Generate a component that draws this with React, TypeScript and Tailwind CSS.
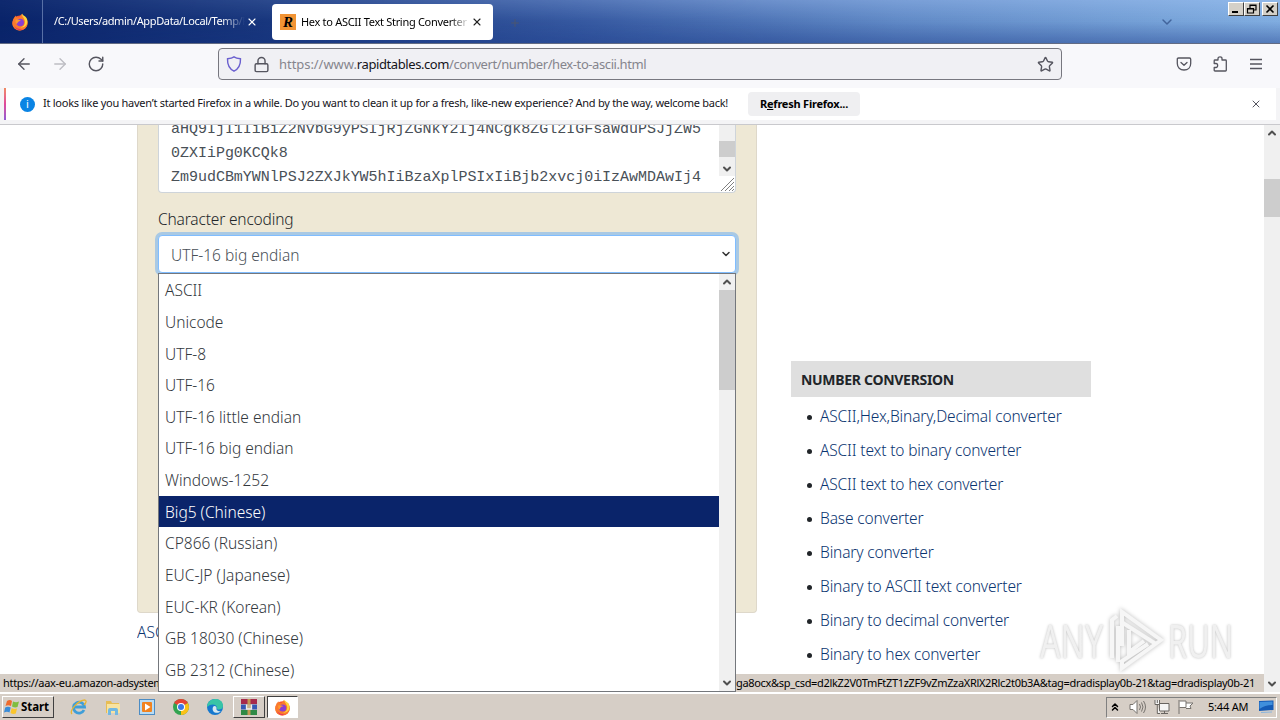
import { useState } from "react";
import {
  ArrowLeft,
  ArrowRight,
  ChevronDown,
  ChevronUp,
  ChevronsUp,
  Lock,
  Menu,
  Plus,
  RotateCw,
  Star,
  X,
} from "lucide-react";

const encodings = [
  "ASCII",
  "Unicode",
  "UTF-8",
  "UTF-16",
  "UTF-16 little endian",
  "UTF-16 big endian",
  "Windows-1252",
  "Big5 (Chinese)",
  "CP866 (Russian)",
  "EUC-JP (Japanese)",
  "EUC-KR (Korean)",
  "GB 18030 (Chinese)",
  "GB 2312 (Chinese)",
];

const links = [
  "ASCII,Hex,Binary,Decimal converter",
  "ASCII text to binary converter",
  "ASCII text to hex converter",
  "Base converter",
  "Binary converter",
  "Binary to ASCII text converter",
  "Binary to decimal converter",
  "Binary to hex converter",
];

function FirefoxIcon({ className }: { className?: string }) {
  return (
    <svg viewBox="0 0 18 18" className={className}>
      <circle cx="9" cy="10" r="7.6" fill="#f9552f" />
      <path d="M2 7C3 4 4 4 4.500 2.500C5 4 6 4.500 8 4.500L10.500 1L12 3C16 5 17.500 9 16 13C14 17 9 18.500 5 16.500C1 14 .7 10 2 7Z" fill="#fb7a2c" />
      <path d="M11 .5C10.500 4 14 5 14 9C14 12 12 14 9.500 14.500C15 15 17.500 10 16 6C15 3 12 3 11 .5Z" fill="#ffd43b" />
      <path d="M3 12C4 16 8 18 12 16.500C8 16.500 4 15 3 12Z" fill="#e3246c" />
      <circle cx="9.200" cy="9.500" r="3.800" fill="#8a3fd1" />
      <path d="M4.500 7C6 6 8 7 10 7.500C8.500 8.500 7 8 6.500 10C6 12 4 10 4.500 7Z" fill="#ff9a2e" />
    </svg>
  );
}

function WindowButton({ children }: { children: React.ReactNode }) {
  return (
    <button className="flex h-[14px] w-4 items-center justify-center border border-t-white border-l-white border-r-[#404040] border-b-[#404040] bg-[#d4d0c8]">
      <svg viewBox="0 0 12 10" className="h-[10px] w-3 shrink-0" fill="none" stroke="#000">
        {children}
      </svg>
    </button>
  );
}

function TabStrip() {
  return (
    <div className="relative flex h-[44px] border-b border-[#626b83] bg-[linear-gradient(90deg,#0a246a_0%,#17357c_20%,#3558a0_45%,#6089c6_70%,#80ade0_100%)]">
      <div className="pointer-events-none absolute inset-0 bg-[linear-gradient(180deg,rgba(180,210,255,0.3)_0%,rgba(80,120,190,0)_50%,rgba(20,50,130,0.4)_100%)] [mask-image:linear-gradient(90deg,rgba(0,0,0,0.1),#000_60%)]" />
      <div className="relative flex w-[43px] items-center justify-center border-r border-[#5870a6] pr-[3px]">
        <FirefoxIcon className="h-[18px] w-[18px]" />
      </div>
      <div className="relative flex w-[225px] items-center pl-[11px] text-white">
        <span className="w-[191px] overflow-hidden pb-px text-[11px] tracking-[-0.36px] whitespace-nowrap [mask-image:linear-gradient(90deg,#000_88%,transparent)]">
          /C:/Users/admin/AppData/Local/Temp/R
        </span>
        <X className="ml-[1px] h-3 w-3" strokeWidth={2.2} />
      </div>
      <div className="relative mt-1 ml-1 flex h-9 w-[221px] items-center rounded bg-white pl-2">
        <span className="flex h-4 w-4 items-center justify-center bg-[#f29434] font-['Liberation_Serif',serif] text-[15px] font-bold text-black italic">
          R
        </span>
        <span className="ml-[5px] w-[169px] overflow-hidden text-[11px] tracking-[-0.3px] whitespace-nowrap text-black [mask-image:linear-gradient(90deg,#000_88%,transparent)]">
          Hex to ASCII Text String Converter
        </span>
        <X className="ml-[1px] h-3 w-3 text-[#222]" strokeWidth={2.2} />
      </div>
      <Plus className="relative mt-[17px] ml-4 h-3 w-3 text-[#4a5670]" />
      <ChevronDown className="absolute top-[14px] left-[1159px] h-4 w-4 text-[#42649c]" strokeWidth={2.2} />
      <div className="absolute top-[2px] right-[2px] flex">
        <WindowButton>
          <path d="M2 8H8" strokeWidth="2" />
        </WindowButton>
        <WindowButton>
          <path d="M4 4V1H10V6H8M4 1.500H10M1.500 4.500H7.500V9H1.500ZM1.500 5H7.500" strokeWidth="1.200" />
        </WindowButton>
        <span className="w-[2px]" />
        <WindowButton>
          <path d="M2.500 1.500L9.500 8.500M9.500 1.500L2.500 8.500" strokeWidth="1.600" />
        </WindowButton>
      </div>
    </div>
  );
}

function Toolbar() {
  return (
    <div className="flex h-[44px] items-center bg-[#f8f8fb] pb-1 text-[#55555f]">
      <ArrowLeft className="ml-[15px] h-[18px] w-[18px]" strokeWidth={1.8} />
      <ArrowRight className="ml-[18px] h-[18px] w-[18px] text-[#bdbdc3]" strokeWidth={1.8} />
      <RotateCw className="ml-[18px] h-[18px] w-[18px]" strokeWidth={1.9} />
      <div className="ml-[113px] flex h-8 w-[844px] items-center rounded border border-[#77777f] bg-[#f0f0f4]">
        <svg viewBox="0 0 16 16" className="ml-[7px] h-4 w-4" fill="none" stroke="#6a5fcf" strokeWidth="1.400">
          <path d="M8 .9C10 2.300 12.200 2.600 14.500 2.800C14.700 8.500 13.500 12.500 8 15.200C2.500 12.500 1.300 8.500 1.500 2.800C3.800 2.600 6 2.300 8 .9Z" />
        </svg>
        <Lock className="ml-[11px] h-[17px] w-[17px]" strokeWidth={2} />
        <span className="mt-[2px] ml-[9px] text-[13px] tracking-[-0.41px] whitespace-nowrap text-[#85858d]">
          <span className="tracking-[-0.05px]">https://www.</span>
          <span className="text-[#15141a]">rapidtables.com</span>
          /convert/number/hex-to-ascii.html
        </span>
        <Star className="mr-[7px] ml-auto h-[17px] w-[17px]" strokeWidth={2} />
      </div>
      <svg viewBox="0 0 16 16" className="ml-[114px] h-4 w-4" fill="none" stroke="currentColor" strokeWidth="1.300" strokeLinecap="round" strokeLinejoin="round">
        <path d="M2.500 2H13.500Q14.700 2 14.700 3.200V7.500C14.700 11.500 12 14 8 14S1.300 11.500 1.300 7.500V3.200Q1.300 2 2.500 2ZM5 6.500L8 9.300L11 6.500" />
      </svg>
      <svg viewBox="0 0 16 16" className="ml-5 h-4 w-4" fill="none" stroke="currentColor" strokeWidth="1.300" strokeLinejoin="round">
        <path d="M6 4V2.500C6 .2 10 .2 10 2.500V4H13.500Q14.300 4 14.300 4.800V14.300Q14.300 15 13.500 15H3Q2.200 15 2.200 14.300V11.500H4C6.200 11.500 6.200 7.500 4 7.500H2.200V4.800Q2.200 4 3 4Z" />
      </svg>
      <svg viewBox="0 0 16 16" className="ml-5 h-4 w-4" stroke="currentColor" strokeWidth="1.300">
        <path d="M2 3.500H14M2 8H14M2 12.500H14" />
      </svg>
    </div>
  );
}

function Notification() {
  return (
    <div className="h-[37px] border-b border-[#c9c9cd] bg-[#f4f4f6] pr-1 pl-1">
      <div className="flex h-8 items-center bg-white">
        <span className="h-8 w-[2px] bg-gradient-to-b from-[#f08a62] via-[#e0489a] to-[#9059d4]" />
        <span className="ml-[14px] flex h-[15px] w-[15px] items-center justify-center rounded-full bg-[#0a84e4] text-[11px] text-white">
          i
        </span>
        <span className="ml-2 w-[705px] pb-px text-[11px] tracking-[-0.26px] whitespace-nowrap text-[#15141a]">
          It looks like you haven’t started Firefox in a while. Do you want to clean it up for a
          fresh, like-new experience? And by the way, welcome back!
        </span>
        <button className="h-6 w-[112px] rounded bg-[#efeff1] text-[11px] font-bold tracking-[-0.22px] text-black">
          R<u>e</u>fresh Firefox...
        </button>
        <X className="mr-[14px] ml-auto h-3 w-3 text-[#55555f]" strokeWidth={2} />
      </div>
    </div>
  );
}

function EncodingMenu({ selected, onSelect }: { selected: string; onSelect: (e: string) => void }) {
  return (
    <div className="absolute top-[273px] left-[158px] z-10 flex h-[419px] w-[578px] border border-[#74777c] bg-white">
      <ul className="flex-1">
        {encodings.map((enc) => (
          <li
            key={enc}
            onMouseEnter={() => onSelect(enc)}
            className={`flex h-[31.670px] items-center pt-[2px] pl-[6px] text-[15.500px] font-light whitespace-nowrap ${
              enc === selected ? "bg-[#0a246a] text-white" : "text-[#33383d]"
            }`}
          >
            {enc}
          </li>
        ))}
      </ul>
      <div className="flex w-4 flex-col items-center bg-[#f0f0f0] text-[#505050]">
        <ChevronUp className="h-4 w-3" strokeWidth={4} />
        <div className="h-[100px] w-4 bg-[#cdcdcd]" />
        <ChevronDown className="mt-auto h-4 w-3" strokeWidth={4} />
      </div>
    </div>
  );
}

function ConverterForm() {
  return (
    <div className="ml-[137px] w-[620px]">
      <div className="h-[488px] rounded-b border border-t-0 border-[#ded8ca] bg-[#eee8d5] px-5">
        <div className="flex h-[68px] rounded-b border border-t-0 border-[#ced4da] bg-white">
          <div className="flex h-[67px] flex-1 flex-col justify-end overflow-hidden pb-[2px] pl-3 font-['Liberation_Mono',monospace] text-[15px] leading-6 tracking-[-0.02px] whitespace-pre text-[#495057]">
            <p>aHQ9IjI1IiBiZ2NvbG9yPSIjRjZGNkY2Ij4NCgk8ZGl2IGFsaWduPSJjZW5</p>
            <p>0ZXIiPg0KCQk8</p>
            <p>Zm9udCBmYWNlPSJ2ZXJkYW5hIiBzaXplPSIxIiBjb2xvcj0iIzAwMDAwIj4</p>
          </div>
          <div className="flex w-4 flex-col items-center">
            <div className="flex h-[51px] w-4 flex-col items-center bg-[#f0f0f0] pt-4 text-[#505050]">
              <div className="h-4 w-4 shrink-0 bg-[#cdcdcd]" />
              <ChevronDown className="mt-[4px] h-4 w-3 shrink-0" strokeWidth={4} />
            </div>
            <svg viewBox="0 0 16 16" className="h-4 w-4" stroke="#808080" fill="none">
              <path d="M2 15L15 2M6 15L15 6M10 15L15 10M13 15L15 13" />
            </svg>
          </div>
        </div>
        <label className="mt-[14px] block text-[15.500px] leading-6 font-light tracking-[-0.17px] text-[#212529]">
          Character encoding
        </label>
        <div className="mt-[4px] flex h-[38px] items-center rounded border border-[#80bdff] bg-white pr-[3px] pl-3 text-[15.500px] font-light text-[#495057] ring-3 ring-[#a9c9e4]">
          <span className="pt-1">UTF-16 big endian</span>
          <ChevronDown className="ml-auto h-3 w-3 text-[#333]" strokeWidth={3} />
        </div>
      </div>
      <p className="mt-2 w-[21px] overflow-hidden text-[15.500px] font-light whitespace-nowrap text-[#0a3470]">
        ASCII to hex converter ►
      </p>
    </div>
  );
}

function Sidebar() {
  return (
    <div className="mt-[236px] ml-[34px] w-[300px]">
      <h2 className="flex h-9 items-center pl-[10px] text-[14px] font-bold tracking-[-0.3px] bg-[#dfdfdf] text-[#212529]">
        <span className="pt-px">NUMBER CONVERSION</span>
      </h2>
      <ul className="mt-[3px]">
        {links.map((link) => (
          <li key={link} className="flex h-[34px] items-center pl-4">
            <span className="mr-[8px] h-[5px] w-[5px] rounded-full bg-[#212529]" />
            <a className="text-[15.500px] font-light tracking-[-0.15px] whitespace-nowrap text-[#0a3470]">{link}</a>
          </li>
        ))}
      </ul>
    </div>
  );
}

function Watermark() {
  return (
    <div className="absolute top-[608px] left-[1040px] flex items-center text-[46px] leading-none text-[#f0f0f0] [text-shadow:0_0_3px_#bbb]">
      <span className="inline-block w-[68px] origin-left scale-x-[0.7]">ANY</span>
      <svg viewBox="0 0 56 64" className="h-16 w-14 drop-shadow-[0_0_2px_#bbb]" fill="none" stroke="#f6f6f6" strokeWidth="4">
        <path d="M14 38V4L53 32L14 60V53L40 36M4 50V12L9 8M10 54V18M15 15L48 36M21 22V44L36 33" />
      </svg>
      <span className="ml-1 inline-block w-[60px] origin-left scale-x-[0.67]">RUN</span>
    </div>
  );
}

function PageScrollbar() {
  return (
    <div className="ml-auto flex w-4 flex-col items-center bg-[#f0f0f0] text-[#505050]">
      <ChevronUp className="h-4 w-3" strokeWidth={4} />
      <div className="mt-[38px] h-[38px] w-4 bg-[#cdcdcd]" />
      <ChevronDown className="mt-auto h-4 w-3" strokeWidth={4} />
    </div>
  );
}

function Taskbar() {
  return (
    <div className="flex h-7 items-center border-t-2 border-white bg-[#d6cec6]">
      <button className="ml-[2px] flex h-[22px] w-[52px] items-center border border-t-white border-l-white border-r-[#404040] border-b-[#404040] pl-px text-[11.500px] font-bold tracking-[-0.1px] text-black">
        <svg viewBox="0 0 16 16" className="mr-[1px] h-4 w-4 shrink-0">
          <path d="M3 2Q6 0 8 2L7 7Q4 5.500 1.500 7Z" fill="#ef6b2d" />
          <path d="M9 2.500Q12 4 15 2.500L13.500 8Q11 9 8 7.500Z" fill="#80bd3e" />
          <path d="M1.200 8.500Q4 7 6.700 8.500L5.500 13.500Q3 12 0 13.500Z" fill="#3a8cd8" />
          <path d="M7.700 9Q10 10.500 13 9.500L11.800 14.500Q9 15.500 6.500 14Z" fill="#fac52c" />
        </svg>
        Start
      </button>
      <svg viewBox="0 0 18 18" className="ml-4 h-[18px] w-[18px]" fill="none">
        <path d="M14 12A5.500 5.500 0 1 1 14.500 9H5" stroke="#3f9ed8" strokeWidth="2.800" />
        <path d="M2 16C-1 13 8 2 15 2C18 3 14 7 14 7" stroke="#e8b530" strokeWidth="1.300" />
      </svg>
      <svg viewBox="0 0 18 18" className="ml-4 h-[18px] w-[18px]">
        <path d="M2 3H7L8 5H15V15H2Z" fill="#e7bd55" />
        <path d="M3 6H16V15H3Z" fill="#f8e3a0" />
        <path d="M4 17V12Q4 10 6 10H12Q14 10 14 12V17H11V13H7V17Z" fill="#72b8e2" />
      </svg>
      <svg viewBox="0 0 16 16" className="ml-[17px] h-4 w-4">
        <rect x=".5" y=".5" width="15" height="15" fill="#b9dcf4" stroke="#4c8cc4" />
        <rect x="3" y="3" width="10" height="10" rx="1" fill="#f18320" />
        <path d="M6 4.500L11.500 8L6 11.500Z" fill="#fff" />
      </svg>
      <svg viewBox="0 0 16 16" className="ml-[18px] h-4 w-4">
        <circle cx="8" cy="8" r="8" fill="#32a350" />
        <path d="M8 8L1.100 4A8 8 0 0 1 14.900 4Z" fill="#e54335" />
        <path d="M8 8L14.900 4A8 8 0 0 1 8 16Z" fill="#fbc116" />
        <circle cx="8" cy="8" r="4" fill="#fff" />
        <circle cx="8" cy="8" r="3" fill="#3b78e7" />
      </svg>
      <svg viewBox="0 0 16 16" className="ml-[18px] h-4 w-4">
        <circle cx="8" cy="8" r="8" fill="#1678ce" />
        <path d="M0 8C0-2 16-3 16 7C16 11 11 11 10 10C11 6 5 3 0 8Z" fill="#38c4a6" />
        <path d="M6 8C4 13 10 16 14 12C11 13 9 11 9.500 9.500C10 7 7 6 6 8Z" fill="#d6e8f0" />
      </svg>
      <div className="ml-[10px] flex h-[22px] w-8 items-center justify-center border border-t-white border-l-white border-r-[#404040] border-b-[#404040]">
        <svg viewBox="0 0 16 16" className="h-4 w-4">
          <path d="M0 0H16V5H0Z" fill="#a72a4b" />
          <path d="M0 5.500H16V10.500H0Z" fill="#3658b4" />
          <path d="M0 11H16V16H0Z" fill="#2f8a46" />
          <path d="M6.500 0H9.500V16H6.500Z" fill="#c39a54" />
          <path d="M5.500 5.500V10H10.500V5.500" fill="#c8b48c" stroke="#eee" strokeWidth="1.300" />
        </svg>
      </div>
      <div className="ml-[2px] flex h-[22px] w-[31px] items-center justify-center border border-t-[#404040] border-l-[#404040] border-r-white border-b-white bg-white">
        <FirefoxIcon className="h-[17px] w-[17px]" />
      </div>
      <div className="mr-[3px] ml-auto flex h-[21px] w-[171px] items-center border border-t-[#808080] border-l-[#808080] border-r-white border-b-white text-[11px] text-black">
        <ChevronsUp className="ml-[2px] h-3 w-3" strokeWidth={3} />
        <svg viewBox="0 0 18 16" className="ml-2 h-4 w-[18px]" fill="#fff" stroke="#77736e">
          <path d="M1 5.500H4L8 1.500V14.500L4 10.500H1Z" />
          <path d="M10.500 5Q12.500 8 10.500 11M12.500 3.500Q15.500 8 12.500 12.500M14.500 2Q18.500 8 14.500 14" fill="none" />
        </svg>
        <svg viewBox="0 0 16 16" className="ml-[7px] h-4 w-4" fill="#f5f5f5" stroke="#686460">
          <path d="M5.500 4.500H15V12H5.500ZM7 14.500H14M10.500 12V14" />
          <path d="M1 1V5.500H5.500V1M3.300 1V4M3.300 5.500V14.500H6" />
        </svg>
        <svg viewBox="0 0 16 16" className="ml-[8px] h-4 w-4" fill="#fff" stroke="#77736e">
          <path d="M1 1V15M1.500 2H8V8.500H1.500M8 4H15L12 7L13 9.500H8" />
        </svg>
        <span className="ml-[14px] tracking-[-0.2px] whitespace-nowrap">5:44 AM</span>
        <svg viewBox="0 0 16 14" className="mr-[2px] ml-auto h-[14px] w-4">
          <path d="M1 1L15.500 0.500V10L1 11Z" fill="#145bb6" />
          <path d="M1.500 2L14.500 1.500V5Q7 5 1.500 9Z" fill="#3f8fdc" />
          <path d="M3 12.500L14 12" stroke="#8ab4dc" />
        </svg>
      </div>
    </div>
  );
}

export default function App() {
  const [selected, setSelected] = useState("Big5 (Chinese)");

  return (
    <div className="relative flex h-[720px] w-[1280px] flex-col overflow-hidden bg-white font-['Noto_Sans',sans-serif]">
      <TabStrip />
      <Toolbar />
      <Notification />
      <div className="flex h-[567px] overflow-hidden">
        <ConverterForm />
        <Sidebar />
        <PageScrollbar />
      </div>
      <Watermark />
      {/* Link target shown while hovering */}
      <div className="absolute top-[674px] left-0 flex h-[18px] w-[1264px] items-center bg-[#d6cec6] pt-px text-[11px] tracking-[-0.32px] whitespace-nowrap text-black">
        <span className="w-[158px] shrink-0 overflow-hidden pl-[3px]">https://aax-eu.amazon-adsystem.com</span>
        <span className="ml-[578px]">
          ga8ocx&sp_csd=d2lkZ2V0TmFtZT1zZF9vZmZzaXRlX2Rlc2t0b3A&tag=dradisplay0b-21&tag=dradisplay0b-21
        </span>
      </div>
      <EncodingMenu selected={selected} onSelect={setSelected} />
      <Taskbar />
    </div>
  );
}
